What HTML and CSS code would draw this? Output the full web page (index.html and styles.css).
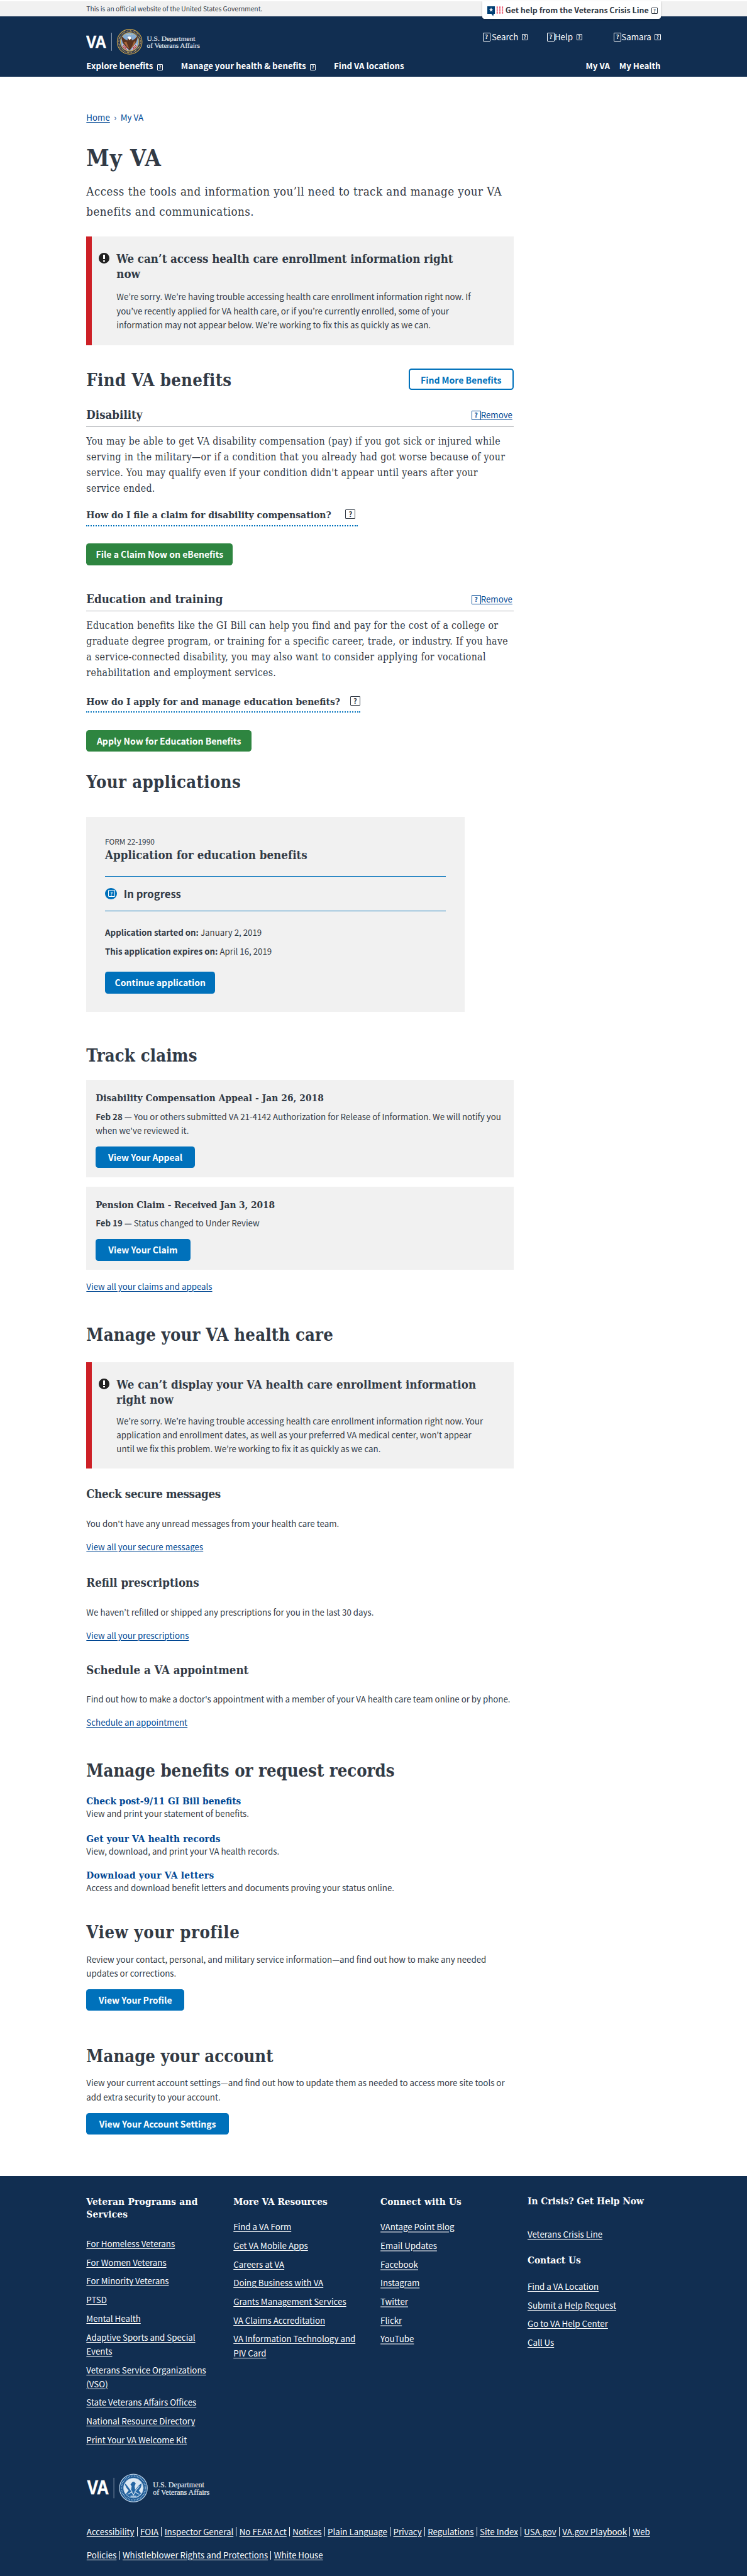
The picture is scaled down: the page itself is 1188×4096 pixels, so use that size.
FILE: index.html
```html
<!DOCTYPE html>
<html lang="en">
<head>
<meta charset="utf-8">
<title>My VA</title>
<link rel="stylesheet" href="styles.css">
</head>
<body>
<div class="official"><div class="wrap official-in">
  <span class="official-text">This is an official website of the United States Government.</span>
  <a class="crisis"><svg class="crisis-icon" viewBox="0 0 28 18"><path fill="#003e73" d="M0 1h13v13h-2l-1 4-3-4H0z"/><path fill="#fff" d="M6.500 3l1 2.800h2.900L8 7.500l.9 2.900-2.400-1.800-2.400 1.800.9-2.900-2.400-1.700h2.900z"/><path stroke="#e31c3d" stroke-width="2.200" stroke-dasharray="2 1.300" d="M17 1.500v12M21.500 1.500v12M26 1.500v12"/></svg><span>Get help from the Veterans Crisis Line</span><i class="tofu">?</i></a>
</div></div>
<header class="header"><div class="wrap">
  <div class="brand-row">
    <svg class="logo" viewBox="0 0 200 46">
      <text x="0" y="32" class="logo-va" textLength="34.500" lengthAdjust="spacingAndGlyphs">VA</text>
      <path d="M43.500 6.500v31" stroke="#a3b0c0"/>
      <circle cx="74.500" cy="22" r="21.300" fill="#26304e" stroke="#c9a54a" stroke-width="1.200"/>
      <circle cx="74.500" cy="22" r="18.500" fill="none" stroke="#d9bd6a" stroke-width="2.200" stroke-dasharray="1 1.500"/>
      <circle cx="74.500" cy="22" r="15.800" fill="#86abd2" stroke="#c9a54a" stroke-width="1.200"/>
      <path fill="#eceef2" d="M61.500 25l6 4 4 8q-8-3-10-12zM87.500 25l-6 4-4 8q8-3 10-12z"/>
      <path stroke="#b5303b" stroke-width="1.300" d="M63 27l6 6M62.500 30l7 5.500M86 27l-6 6M86.500 30l-7 5.500"/>
      <path fill="#5a3320" d="M60.500 13q3 1 5 4l5 3 1-4 3-2 3 1 1 5 5-3q2-3 5-5-1 10-7 16l-4 5-3 4-3-3-4-4q-7-7-7-17z"/>
      <path fill="#a9673a" d="M69 22l3 8 2 4-4-3-5-8zM82 21l-3 8-2 4 4-3 4-8z"/>
      <path fill="#fff" d="M71 14.500q2-2.500 5-1l1.500 3-3.500 2.500z"/>
      <path stroke="#f0d98c" stroke-width="1.200" stroke-dasharray="1.500 1.500" d="M69.500 9.500h10"/>
      <text x="104" y="20" class="logo-dept" textLength="83" lengthAdjust="spacingAndGlyphs">U.S. Department</text>
      <text x="104" y="32" class="logo-dept" textLength="91" lengthAdjust="spacingAndGlyphs">of Veterans Affairs</text>
    </svg>
    <div class="tools">
      <a class="tool t1"><i class="tofu big">?</i><span>Search</span><i class="tofu">?</i></a>
      <a class="tool t2"><i class="tofu big">?</i><span>Help</span><i class="tofu">?</i></a>
      <a class="tool t3"><i class="tofu big">?</i><span>Samara</span><i class="tofu">?</i></a>
    </div>
  </div>
  <nav class="nav">
    <a>Explore benefits<i class="tofu">?</i></a>
    <a>Manage your health &amp; benefits<i class="tofu">?</i></a>
    <a>Find VA locations</a>
    <a class="right">My VA</a>
    <a class="last">My Health</a>
  </nav>
</div></header>
<main class="wrap"><div class="col">
  <div class="crumbs"><a class="link">Home</a><span class="sep">›</span><a>My VA</a></div>
  <h1>My VA</h1>
  <p class="intro">Access the tools and information you’ll need to track and manage your VA<br>benefits and communications.</p>

  <section class="alert first">
    <i class="bang"></i>
    <h3>We can’t access health care enrollment information right<br>now</h3>
    <p>We’re sorry. We’re having trouble accessing health care enrollment information right now. If<br>you’ve recently applied for VA health care, or if you’re currently enrolled, some of your<br>information may not appear below. We’re working to fix this as quickly as we can.</p>
  </section>

  <div class="find-row"><h2>Find VA benefits</h2><a class="btn outline">Find More Benefits</a></div>

  <div class="benefit-head"><h3>Disability</h3><span class="remove"><i class="tofu mid">?</i><a class="link">Remove</a></span></div>
  <p class="slab">You may be able to get VA disability compensation (pay) if you got sick or injured while<br>serving in the military—or if a condition that you already had got worse because of your<br>service. You may qualify even if your condition didn't appear until years after your<br>service ended.</p>
  <div class="question q1"><span>How do I file a claim for disability compensation?</span><i class="tofu large">?</i></div>
  <div><a class="btn green b251">File a Claim Now on eBenefits</a></div>

  <div class="benefit-head second"><h3>Education and training</h3><span class="remove"><i class="tofu mid">?</i><a class="link">Remove</a></span></div>
  <p class="slab edu">Education benefits like the GI Bill can help you find and pay for the cost of a college or<br>graduate degree program, or training for a specific career, trade, or industry. If you have<br>a service-connected disability, you may also want to consider applying for vocational<br>rehabilitation and employment services.</p>
  <div class="question q2"><span>How do I apply for and manage education benefits?</span><i class="tofu large">?</i></div>
  <div><a class="btn green b283">Apply Now for Education Benefits</a></div>

  <h2 class="h-apps">Your applications</h2>
  <section class="app">
    <p class="form-no">FORM 22-1990</p>
    <h3>Application for education benefits</h3>
    <div class="status"><span class="dot"><i class="tofu tiny">?</i></span><b>In progress</b></div>
    <p><b>Application started on:</b> January 2, 2019</p>
    <p class="expires"><b>This application expires on:</b> April 16, 2019</p>
    <a class="btn b189">Continue application</a>
  </section>

  <h2 class="h-track">Track claims</h2>
  <section class="claim">
    <h4>Disability Compensation Appeal - Jan 26, 2018</h4>
    <p><b>Feb 28 —</b> You or others submitted VA 21-4142 Authorization for Release of Information. We will notify you<br>when we've reviewed it.</p>
    <a class="btn b170">View Your Appeal</a>
  </section>
  <section class="claim next">
    <h4>Pension Claim - Received Jan 3, 2018</h4>
    <p><b>Feb 19 —</b> Status changed to Under Review</p>
    <a class="btn b162">View Your Claim</a>
  </section>
  <p class="more"><a class="link">View all your claims and appeals</a></p>

  <h2 class="h-health">Manage your VA health care</h2>
  <section class="alert second">
    <i class="bang"></i>
    <h3>We can’t display your VA health care enrollment information<br>right now</h3>
    <p>We’re sorry. We’re having trouble accessing health care enrollment information right now. Your<br>application and enrollment dates, as well as your preferred VA medical center, won’t appear<br>until we fix this problem. We’re working to fix it as quickly as we can.</p>
  </section>
  <section class="topic t-msg"><h3>Check secure messages</h3><p>You don't have any unread messages from your health care team.</p><p class="go"><a class="link">View all your secure messages</a></p></section>
  <section class="topic t-rx"><h3>Refill prescriptions</h3><p>We haven’t refilled or shipped any prescriptions for you in the last 30 days.</p><p class="go"><a class="link">View all your prescriptions</a></p></section>
  <section class="topic t-appt"><h3>Schedule a VA appointment</h3><p>Find out how to make a doctor's appointment with a member of your VA health care team online or by phone.</p><p class="go"><a class="link">Schedule an appointment</a></p></section>

  <h2 class="h-records">Manage benefits or request records</h2>
  <section class="record r1"><h4>Check post-9/11 GI Bill benefits</h4><p>View and print your statement of benefits.</p></section>
  <section class="record r2"><h4>Get your VA health records</h4><p>View, download, and print your VA health records.</p></section>
  <section class="record r3"><h4>Download your VA letters</h4><p>Access and download benefit letters and documents proving your status online.</p></section>

  <h2 class="h-profile">View your profile</h2>
  <p class="blurb">Review your contact, personal, and military service information—and find out how to make any needed<br>updates or corrections.</p>
  <a class="btn b168">View Your Profile</a>

  <h2 class="h-account">Manage your account</h2>
  <p class="blurb">View your current account settings—and find out how to update them as needed to access more site tools or<br>add extra security to your account.</p>
  <a class="btn b244">View Your Account Settings</a>
</div></main>
<footer class="footer"><div class="wrap">
  <div class="foot-cols">
    <div>
      <h4 class="programs">Veteran Programs and<br>Services</h4>
      <ul class="l1"><li><a>For Homeless Veterans</a></li><li><a>For Women Veterans</a></li><li><a>For Minority Veterans</a></li><li><a>PTSD</a></li><li><a>Mental Health</a></li><li><a>Adaptive Sports and Special<br>Events</a></li><li><a>Veterans Service Organizations<br>(VSO)</a></li><li><a>State Veterans Affairs Offices</a></li><li><a>National Resource Directory</a></li><li><a>Print Your VA Welcome Kit</a></li></ul>
    </div>
    <div>
      <h4>More VA Resources</h4>
      <ul class="l2"><li><a>Find a VA Form</a></li><li><a>Get VA Mobile Apps</a></li><li><a>Careers at VA</a></li><li><a>Doing Business with VA</a></li><li><a>Grants Management Services</a></li><li><a>VA Claims Accreditation</a></li><li><a>VA Information Technology and<br>PIV Card</a></li></ul>
    </div>
    <div>
      <h4 class="connect">Connect with Us</h4>
      <ul class="l2 social"><li><a>VAntage Point Blog</a></li><li><a>Email Updates</a></li><li><a>Facebook</a></li><li><a>Instagram</a></li><li><a>Twitter</a></li><li><a>Flickr</a></li><li><a>YouTube</a></li></ul>
    </div>
    <div class="help-col">
      <h4>In Crisis? Get Help Now</h4>
      <ul class="l3"><li><a>Veterans Crisis Line</a></li></ul>
      <h4 class="contact">Contact Us</h4>
      <ul class="l4"><li><a>Find a VA Location</a></li><li><a>Submit a Help Request</a></li><li><a>Go to VA Help Center</a></li><li><a>Call Us</a></li></ul>
    </div>
  </div>
  <svg class="foot-logo" viewBox="0 0 220 52">
    <text x="1.500" y="36.500" class="logo-va f" textLength="37.500" lengthAdjust="spacingAndGlyphs">VA</text>
    <path d="M47.500 8.500v35" stroke="#8797ab"/>
    <circle cx="81" cy="26" r="23.800" fill="#1e5a94" stroke="#b9cfe4" stroke-width="1.300"/>
    <circle cx="81" cy="26" r="20.500" fill="none" stroke="#a5c3df" stroke-width="2.300" stroke-dasharray="1.100 1.600"/>
    <circle cx="81" cy="26" r="17" fill="#dce8f3" stroke="#a5c3df"/>
    <path fill="#2466a5" d="M66 18q3 1 5 5l6 6 1-6-2-3 3-4 3-1 3 3-2 5 1 6 5-6q3-4 6-5 0 8-5 12l4 5q-5 7-13 7t-13-6l5-6q-5-4-7-12z"/>
    <path fill="none" stroke="#dce8f3" stroke-width="1.200" d="M72 23l7 10M91 23l-8 10M71 37l7-4 3 5 3-5 7 4M76 40h10"/>
    <text x="114.500" y="24.500" class="logo-dept f" textLength="88" lengthAdjust="spacingAndGlyphs">U.S. Department</text>
    <text x="114.500" y="38" class="logo-dept f" textLength="97" lengthAdjust="spacingAndGlyphs">of Veterans Affairs</text>
  </svg>
  <div class="legal"><a>Accessibility</a><a>FOIA</a><a>Inspector General</a><a>No FEAR Act</a><a>Notices</a><a>Plain Language</a><a>Privacy</a><a>Regulations</a><a>Site Index</a><a>USA.gov</a><a>VA.gov Playbook</a><a class="end">Web</a><br><a>Policies</a><a>Whistleblower Rights and Protections</a><a class="end">White House</a></div>
</div></footer>
</body>
</html>
```

FILE: styles.css
```css
* { box-sizing: border-box; }
/* one rem is one unit of the 1280-unit wide design grid */
html { background: #112e51; font-size: .928125px; }
body {
  margin: 0;
  padding-top: 2rem;
  background: #fff;
  color: #323a45;
  font-family: "Noto Sans CJK KR", "Open Sans", sans-serif;
  font-size: 14.33rem;
  line-height: 24rem;
}
h1, h2, h3, h4, p, ul { margin: 0; padding: 0; }
h1, h2, h3, h4, .intro, .slab, .question { font-family: "DejaVu Serif Condensed", "DejaVu Serif", serif; white-space: nowrap; }
p { white-space: nowrap; padding-top: 1.1rem; margin-bottom: -1.1rem; }
ul { list-style: none; }
.wrap { width: 984rem; margin: 0 auto; }
.col { width: 732rem; }
.link { color: #004793; text-decoration: underline; text-underline-offset: 2rem; text-decoration-thickness: 1px; }

/* boxed question mark */
.tofu {
  display: inline-block;
  width: 10rem;
  height: 11rem;
  border: 1px solid currentColor;
  border-radius: 1px;
  font: bold 8rem/9rem "Noto Sans CJK KR", sans-serif;
  text-align: center;
}
.tofu.big { width: 13rem; height: 15rem; font-size: 10rem; line-height: 12rem; border-width: 1.5px; }
.tofu.mid { width: 16rem; height: 16rem; font-size: 11rem; line-height: 13rem; border-width: 1.5px; color: #004793; }
.tofu.large { width: 17rem; height: 17rem; font-size: 12rem; line-height: 14rem; border-width: 1.5px; }
.tofu.tiny { width: 12rem; height: 12rem; font-size: 8rem; line-height: 10rem; }

.official { height: 26rem; background: #f1f1f1; }
.official-in { display: flex; justify-content: space-between; align-items: flex-start; }
.official-text { font-size: 11.09rem; line-height: 26rem; }
.crisis {
  display: flex;
  align-items: center;
  width: 306rem;
  height: 30rem;
  padding-left: 9rem;
  background: #fff;
  border-radius: 0 0 4rem 4rem;
  box-shadow: 0 1px 3px rgba(0, 0, 0, .25);
  font-size: 13.4rem;
  font-weight: bold;
  white-space: nowrap;
}
.crisis-icon { width: 28rem; height: 18rem; margin: 4rem 3rem 0 0; }
.crisis .tofu { margin-left: 5rem; margin-top: 2rem; }

.header { height: 104rem; background: #112e51; color: #fff; }
.brand-row { display: flex; height: 72rem; padding-top: 22rem; justify-content: space-between; }
.logo { width: 200rem; height: 46rem; }
.logo-va { font: bold 29px "Liberation Sans", sans-serif; fill: #fff; stroke: #fff; stroke-width: .6px; }
.logo-va.f { font-size: 33px; }
.logo-dept { font: 12.2px "Liberation Serif", serif; fill: #e6eaef; stroke: #e6eaef; stroke-width: .2px; }
.logo-dept.f { font-size: 13.5px; }
.tools { display: flex; height: 28rem; align-items: center; width: 305rem; }
.tool { display: flex; align-items: center; }
.tool .tofu:last-child { margin-left: 6rem; }
.t1 span { margin-left: 2.5rem; }
.t2 { margin-left: 33rem; }
.t3 { margin-left: auto; }
.nav { display: flex; font-weight: bold; height: 24rem; line-height: 24rem; margin-top: 1rem; white-space: nowrap; }
.nav a { margin-right: 31rem; }
.nav .tofu { margin-left: 7rem; }
.nav .right { margin-left: auto; margin-right: 16rem; }
.nav .last { margin-right: 0; }

.crumbs { padding-top: 57.6rem; height: 81rem; color: #004793; }
.crumbs .sep { margin: 0 7rem; }
h1 { margin-top: 35rem; margin-bottom: -.5rem; font-size: 39.5rem; line-height: 48rem; letter-spacing: .8rem; }
.intro { margin: 16rem 0 0; padding-top: .3rem; font-size: 20rem; line-height: 34rem; letter-spacing: .5rem; }
h2 { font-size: 29.4rem; line-height: 36rem; }
h3 { padding-top: .3rem; margin-bottom: -.3rem; font-size: 20rem; line-height: 26rem; }
h4 { padding-top: .3rem; margin-bottom: -.3rem; font-size: 16.5rem; line-height: 22rem; }

.alert { position: relative; background: #f1f1f1; border-left: 10rem solid #cd2026; padding-left: 42rem; padding-top: 25.4rem; }
.alert.first { margin-top: 25.3rem; height: 187rem; }
.alert.first h3 { letter-spacing: -.04rem; }
.alert.second { margin-top: 28.8rem; height: 182rem; }
.alert.second h3 { letter-spacing: .07rem; }
.alert.first p { margin-top: 13.5rem; }
.alert.second p { margin-top: 10.9rem; }
.bang { position: absolute; left: 12rem; top: 28rem; width: 18rem; height: 18rem; border-radius: 50%; background: #212121; }
.bang::before, .bang::after { content: ""; position: absolute; left: 7.5rem; width: 3rem; background: #fff; }
.bang::before { top: 3rem; height: 8rem; }
.bang::after { top: 12.5rem; height: 2.5rem; }

.find-row { display: flex; justify-content: space-between; align-items: flex-start; margin-top: 39rem; height: 37rem; }
.find-row h2 { margin-top: 2.2rem; letter-spacing: .35rem; }
.btn {
  display: block;
  height: 37rem;
  border-radius: 5rem;
  background: #0071bb;
  color: #fff;
  font-size: 15.1rem;
  font-weight: bold;
  line-height: 38rem;
  text-align: center;
  white-space: nowrap;
}
.btn.outline { width: 180rem; background: #fff; color: #0071bb; border: 2px solid #0071bb; line-height: 35.5rem; }
.btn.green { background: #2e8540; }
.b251 { width: 251rem; margin-top: 30rem; }
.b283 { width: 283rem; margin-top: 29.6rem; }
.b189 { width: 189rem; margin-top: 23.7rem; }
.b170 { width: 170rem; margin-top: 15.7rem; }
.b162 { width: 162rem; margin-top: 15.7rem; }
.b168 { width: 168rem; margin-top: 15.7rem; }
.b244 { width: 244rem; margin-top: 15.7rem; }

.benefit-head { display: flex; justify-content: space-between; margin-top: 30.4rem; height: 33.6rem; border-bottom: 1px solid #aeb0b5; }
.benefit-head.second { margin-top: 45.7rem; }
.remove { display: flex; align-items: center; height: 26rem; padding-right: 2rem; }
.slab { margin: 10.2rem 0 0; padding: 0 0 .9rem; font-size: 17rem; line-height: 27rem; letter-spacing: .38rem; }
.slab.edu { padding-bottom: .8rem; letter-spacing: .34rem; }
.question { display: flex; justify-content: space-between; border-bottom: 2px dotted #0071bb; height: 33rem; font-size: 16.8rem; line-height: 27rem; font-weight: bold; }
.question .tofu { margin-top: 4rem; }
.q1 { width: 465rem; margin-top: 17.3rem; padding-right: 4rem; }
.q2 { width: 469rem; margin-top: 21.6rem; }

.h-apps { margin-top: 33.9rem; letter-spacing: .43rem; }
.app { width: 648rem; height: 334rem; margin-top: 42.1rem; padding: 30.5rem 32rem 0; background: #f1f1f1; }
.app h3 { letter-spacing: .05rem; }
.form-no { font-size: 12.83rem; line-height: 22rem; }
.status { display: flex; align-items: center; gap: 12rem; height: 60rem; margin: 22.6rem 0 24.3rem; border: solid #0071bb; border-width: 1px 0; font-size: 17.9rem; }
.dot { display: flex; width: 20rem; height: 20rem; border-radius: 50%; background: #0071bb; color: #fff; align-items: center; justify-content: center; padding-left: 2rem; }
.expires { margin-top: 8rem; }

.h-track { margin-top: 56.9rem; letter-spacing: .13rem; }
.claim { margin-top: 23.2rem; padding: 20.4rem 16rem 16rem; background: #f1f1f1; }
.claim h4 { letter-spacing: .09rem; }
.claim.next { margin-top: 16rem; }
.claim.next h4 { letter-spacing: -.07rem; }
.claim p { margin-top: 7.9rem; }
.more { margin-top: 15.8rem; }
.h-health { margin-top: 53.4rem; letter-spacing: .18rem; }

.t-msg { margin-top: 31.1rem; }
.t-msg h3 { letter-spacing: -.37rem; }
.t-rx { margin-top: 37.6rem; }
.t-appt { margin-top: 34.6rem; }
.topic p { margin-top: 24.5rem; }
.topic .go { margin-top: 16rem; }
.h-records { margin-top: 53.4rem; }
.record h4 { color: #004793; line-height: 19rem; padding-top: 1.3rem; margin-bottom: -1.3rem; }
.r1 { margin-top: 23.7rem; }
.r2 { margin-top: 22rem; }
.r2 h4 { letter-spacing: .22rem; }
.r3 { margin-top: 19.1rem; }
.r3 h4 { letter-spacing: .35rem; }
.h-profile { margin-top: 47rem; letter-spacing: .62rem; }
.h-account { margin-top: 59.9rem; }
.blurb { margin-top: 15.4rem; }

.footer { margin-top: 71rem; padding-top: 33.4rem; height: 686rem; background: #112e51; color: #fff; }
.foot-cols { display: grid; grid-template-columns: repeat(4, 252rem); width: 984rem; height: 430.4rem; }
.footer li { padding-top: 1.1rem; margin-bottom: 6.9rem; white-space: nowrap; }
.footer a { text-decoration: underline; text-underline-offset: 2rem; text-decoration-thickness: 1px; }
.footer .social a { text-decoration-color: #8896a8; text-decoration-thickness: 2px; }
.programs { letter-spacing: .26rem; }
.connect { letter-spacing: .18rem; }
.l1 { margin-top: 26.4rem; }
.l2 { margin-top: 19.4rem; }
.l3 { margin-top: 33.4rem; }
.l4 { margin-top: 21.4rem; }
.help-col { margin-top: -1rem; }
.contact { margin-top: 20.7rem; }
.foot-logo { display: block; width: 220rem; height: 52rem; margin-top: 45.2rem; }
.legal { margin-top: 28.2rem; line-height: 40rem; padding-left: .5rem; white-space: nowrap; }
.legal a:not(.end)::after { content: ""; display: inline-block; height: 16rem; border-right: 1px solid #fff; margin: 0 4.6rem; vertical-align: -3rem; }
```
